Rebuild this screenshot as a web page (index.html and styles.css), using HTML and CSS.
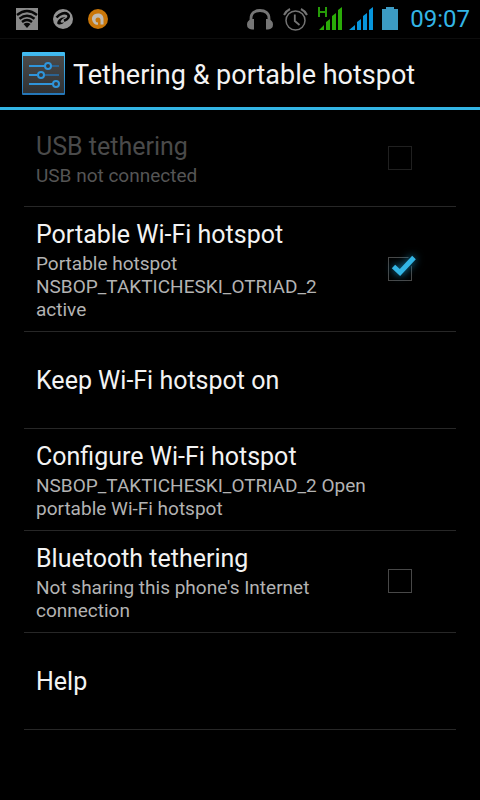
FILE: index.html
```html
<!DOCTYPE html>
<html lang="en">
<head>
<meta charset="utf-8">
<meta name="viewport" content="width=device-width, initial-scale=1">
<title>Tethering &amp; portable hotspot</title>
<link rel="stylesheet" href="styles.css">
</head>
<body>
<div class="status">
  <div class="status-group notices">
    <svg width="22" height="22" viewBox="0 0 22 22" aria-hidden="true">
      <rect width="22" height="22" fill="#898989"/>
      <g fill="none" stroke="#080808" stroke-width="2.400"><path d="M1 7Q11-1 21 7"/><path d="M3.500 10.800Q11 4.800 18.500 10.800"/><path d="M6 14Q11 10 16 14"/></g>
      <path d="M7.500 16Q11 13.500 14.500 16L11 20Z" fill="#080808"/>
    </svg>
    <svg width="20" height="20" viewBox="0 0 20 20" aria-hidden="true">
      <circle cx="10" cy="10" r="10" fill="#939393"/>
      <path d="M3.500 8.500C7 4.500 12 3 14.500 5C17.500 7.500 14.500 10.500 11 11.800" fill="none" stroke="#080808" stroke-width="2.600"/>
      <path d="M12.500 8.300C8 7.500 4.200 11 4.200 14.500C5.500 16.500 9.500 15.500 11 13.300C9 14 7.800 13.800 7.600 12.800C8 11 10 9.500 12.500 8.300Z" fill="#080808"/>
    </svg>
    <svg width="20" height="20" viewBox="0 0 20 20" aria-hidden="true">
      <circle cx="10" cy="10" r="10" fill="#c97608"/>
      <path d="M6 14.500C1.500 9 5 4.500 10 4.500C14 4.500 15.500 7 15.500 10V15.500H12.500V11A2.500 2.500 0 1 0 10 13.500V15.800C8.500 16 7 15.500 6 14.500Z" fill="#c0bbb3"/>
    </svg>
  </div>
  <div class="status-group">
    <svg width="26" height="24" viewBox="0 0 26 24" aria-hidden="true">
      <path d="M4 14V11.500C4 6 8 3.500 13 3.500S22 6 22 11.500V14" fill="none" stroke="#757575" stroke-width="2.800"/>
      <path d="M7 12V22.500H5Q0 22 0 17.500T5 12ZM19 12V22.500H21Q26 22 26 17.500T21 12Z" fill="#757575"/>
    </svg>
    <svg class="alarm" width="25" height="24" viewBox="0 0 25 24" aria-hidden="true">
      <g fill="none" stroke="#747474" stroke-width="1.500"><circle cx="12.500" cy="13.500" r="9.500"/><path d="M11.800 7.500V14L16.500 18" stroke-width="1.800"/><path d="M1 8Q3 4 7 2M24 8Q22 4 18 2" stroke-width="2"/></g>
    </svg>
    <svg class="mobile" width="25" height="24" viewBox="0 0 25 24" aria-hidden="true">
      <path d="M1 0V10M8 0V10M1 5H8" fill="none" stroke="#269b08" stroke-width="2"/>
      <path d="M1 23L6 18V23ZM8 23V15L12 12V23ZM14 23V9L18 6V23ZM20 23V3L24 0V23Z" fill="#2aab08"/>
    </svg>
    <svg width="25" height="24" viewBox="0 0 25 24" aria-hidden="true">
      <path d="M0 23L6 18V23ZM8 23V15L12 12V23ZM14 23V9L18 6V23ZM20 23V3L24 0V23Z" fill="#0795dc"/>
    </svg>
    <svg width="16" height="24" viewBox="0 0 16 24" aria-hidden="true"><path d="M4 0H12V2H16V23H0V2H4Z" fill="#3c9bc3"/></svg>
    <time class="clock">09:07</time>
  </div>
</div>
<header class="header">
  <svg width="43" height="43" viewBox="0 0 43 43" aria-hidden="true">
    <defs>
      <linearGradient id="face" x1="0" y1="0" x2="0" y2="1"><stop offset="0" stop-color="#4a4a4a"/><stop offset="1" stop-color="#303234"/></linearGradient>
      <linearGradient id="rim" x1="0" y1="0" x2="0" y2="1"><stop offset="0" stop-color="#43bdf2"/><stop offset="1" stop-color="#2475b6"/></linearGradient>
    </defs>
    <rect width="43" height="43" rx="1" fill="url(#rim)"/>
    <rect x="1" y="4" width="41" height="37" fill="url(#face)"/>
    <g fill="none" stroke="#2c6290" stroke-width="2"><path d="M7 14H37M7 23H37M7 32H33"/></g>
    <g fill="none" stroke="#2f95db" stroke-width="2"><path d="M7 14H23M7 23H15M7 32H31"/><g fill="#383a3c"><circle cx="26" cy="14" r="3"/><circle cx="19" cy="23" r="3"/><circle cx="34" cy="32" r="3"/></g></g>
  </svg>
  <h1 class="heading">Tethering &amp; portable hotspot</h1>
</header>
<main class="list">
  <label class="row disabled">
    <span class="text"><span class="title">USB tethering</span><span class="summary">USB not connected</span></span>
    <span class="widget"><input class="box" type="checkbox" disabled></span>
  </label>
  <label class="row">
    <span class="text"><span class="title">Portable Wi-Fi hotspot</span><span class="summary">Portable hotspot NSBOP_TAKTICHESKI_OTRIAD_2 active</span></span>
    <span class="widget"><input class="box" type="checkbox" checked><svg class="tick" width="48" height="48" viewBox="0 0 48 48" aria-hidden="true"><path d="M17.500 21.500L24 27.500L38 12.500" stroke="#000" stroke-width="8"/><path class="glow" d="M17.500 21.500L24 27.500L38 12.500"/></svg></span>
  </label>
  <button class="row" type="button"><span class="text"><span class="title">Keep Wi-Fi hotspot on</span></span></button>
  <button class="row" type="button"><span class="text"><span class="title">Configure Wi-Fi hotspot</span><span class="summary">NSBOP_TAKTICHESKI_OTRIAD_2 Open portable Wi-Fi hotspot</span></span></button>
  <label class="row">
    <span class="text"><span class="title">Bluetooth tethering</span><span class="summary">Not sharing this phone's Internet connection</span></span>
    <span class="widget"><input class="box" type="checkbox"></span>
  </label>
  <button class="row" type="button"><span class="text"><span class="title">Help</span></span></button>
</main>
</body>
</html>
```
FILE: styles.css
```css
* { box-sizing: border-box; }
body {
  margin: 0;
  background: #000;
  color: #f3f3f3;
  font-family: Roboto, "Liberation Sans", sans-serif;
}
svg { display: block; flex: none; }
.status {
  display: flex;
  justify-content: space-between;
  align-items: center;
  height: 39px;
  padding: 0 10px 0 16px;
  border-bottom: 1px solid #0d0d0d;
}
.status-group { display: flex; align-items: center; gap: 8px; }
.notices { gap: 15px; }
.alarm { margin-left: 2px; }
.mobile { margin: 0 -2px 0 2px; }
.clock {
  margin-left: 4px;
  color: #33b5e5;
  font-size: 24px;
  line-height: 38px;
}
.header {
  display: flex;
  align-items: center;
  gap: 8px;
  height: 71px;
  padding: 0 22px;
  border-bottom: 3px solid #33b5e5;
}
.heading {
  margin: 0;
  padding-top: 4px;
  font-size: 27px;
  font-weight: 400;
  line-height: 32px;
}
.list { padding: 0 24px; }
.row {
  display: flex;
  align-items: center;
  width: 100%;
  min-height: 97px;
  padding: 11px 20px 10px 12px;
  border: 0;
  border-bottom: 1px solid #272727;
  background: none;
  color: inherit;
  font: inherit;
  text-align: left;
}
.text { flex: 1; min-width: 0; }
.title, .summary { display: block; }
.title { font-size: 25px; line-height: 34px; }
.summary { color: #b3b3b3; font-size: 19px; line-height: 23px; }
.disabled .title { color: #4a4a4a; }
.disabled .summary { color: #555; }
.widget {
  position: relative;
  display: flex;
  justify-content: center;
  flex: none;
  width: 72px;
  margin-bottom: 2px;
}
.box {
  appearance: none;
  width: 24px;
  height: 24px;
  margin: 0;
  border: 1px solid #484848;
}
.disabled .box { border-color: #202020; }
.tick {
  position: absolute;
  top: -12px;
  left: 12px;
  fill: none;
  overflow: visible;
  pointer-events: none;
}
.glow {
  stroke: #33b5e5;
  stroke-width: 5;
  filter: drop-shadow(0 0 4px #1688b5);
}
.box:not(:checked) + .tick { display: none; }
```
